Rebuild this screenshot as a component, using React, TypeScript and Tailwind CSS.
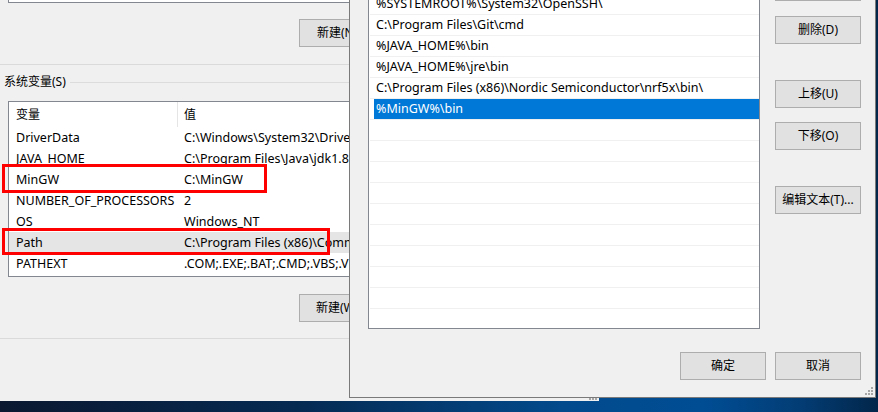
import React from "react";

function Btn({ children, className = "" }: { children?: React.ReactNode; className?: string }) {
  return (
    <div
      className={`flex h-[28px] w-[86px] shrink-0 items-center justify-center border border-[#adadad] bg-[#e1e1e1] text-[12px] leading-[16px] text-black ${className}`}
    >
      {children}
    </div>
  );
}

function Grip() {
  return (
    <svg width="9" height="9" viewBox="0 0 9 9" className="block">
      <rect x="7" y="1" width="2" height="2" fill="#a6a6a6" />
      <rect x="4" y="4" width="2" height="2" fill="#a6a6a6" />
      <rect x="7" y="4" width="2" height="2" fill="#a6a6a6" />
      <rect x="1" y="7" width="2" height="2" fill="#a6a6a6" />
      <rect x="4" y="7" width="2" height="2" fill="#a6a6a6" />
      <rect x="7" y="7" width="2" height="2" fill="#a6a6a6" />
    </svg>
  );
}

const sysVars: [string, string][] = [
  ["DriverData", "C:\\Windows\\System32\\Drivers\\DriverData"],
  ["JAVA_HOME", "C:\\Program Files\\Java\\jdk1.8.0_201"],
  ["MinGW", "C:\\MinGW"],
  ["NUMBER_OF_PROCESSORS", "2"],
  ["OS", "Windows_NT"],
  ["Path", "C:\\Program Files (x86)\\Common Files\\Oracle\\Java\\javapath"],
  ["PATHEXT", ".COM;.EXE;.BAT;.CMD;.VBS;.VBE;.JS;.JSE;.WSF;.WSH;.MSC"],
];

const pathItems = [
  "%SYSTEMROOT%\\System32\\OpenSSH\\",
  "C:\\Program Files\\Git\\cmd",
  "%JAVA_HOME%\\bin",
  "%JAVA_HOME%\\jre\\bin",
  "C:\\Program Files (x86)\\Nordic Semiconductor\\nrf5x\\bin\\",
];

export default function App() {
  return (
    <div className="relative h-[412px] w-[878px] overflow-hidden bg-[linear-gradient(90deg,#0b1830_0%,#052a52_34%,#024a8c_64%,#004d94_80%,#033d75_91%,#02264a_100%)] font-['Noto_Sans','Noto_Sans_CJK_SC',sans-serif] text-[12px] text-black">
      {/* Back window: 环境变量 */}
      <div className="absolute left-0 top-0 flex h-[401px] w-[599px] flex-col bg-[#f0f0f0]">
        <div className="ml-[8px] h-[3px] w-[580px] border-x border-b border-[#828790] bg-white" />
        <Btn className="ml-[299px] mt-[16px]">新建(N)...</Btn>
        <div className="mt-[17px] h-px bg-[#dadada]" />
        <div className="mt-[9px] flex h-[16px] items-center">
          <span className="ml-[4px] leading-[16px]">系统变量(S)</span>
          <div className="ml-[4px] h-px flex-1 bg-[#dcdcdc]" />
        </div>
        <div className="ml-[8px] mt-[11px] h-[176px] w-[580px] overflow-hidden border border-[#828790] bg-white">
          <div className="flex h-[25px] items-center">
            <div className="flex h-full w-[169px] items-center border-r border-[#e5e5e5] pl-[7px]">变量</div>
            <div className="pl-[6px]">值</div>
          </div>
          {sysVars.map(([k, v]) => (
            <div
              key={k}
              className={`flex h-[21px] items-center whitespace-nowrap pt-px text-[12.5px] ${k === "Path" ? "bg-[#e5e5e5]" : ""}`}
            >
              <div className="w-[169px] shrink-0 pl-[7px]">{k}</div>
              <div className="pl-[6px]">{v}</div>
            </div>
          ))}
        </div>
        <Btn className="ml-[299px] mt-[17px]">新建(W)...</Btn>
        <div className="mt-[16px] h-px bg-[#dadada]" />
        <div className="absolute bottom-[1px] right-[2px]">
          <Grip />
        </div>
      </div>

      {/* Red annotation boxes */}
      <div className="absolute left-[2px] top-[164px] h-[29px] w-[265px] border-[3px] border-[#ff0000]" />
      <div className="absolute left-[2px] top-[228px] h-[27px] w-[328px] border-[3px] border-[#ff0000]" />

      {/* Front window: 编辑环境变量 */}
      <div className="absolute left-[349px] top-0 flex h-[398px] w-[527px] flex-col border-x border-b border-[#7a7a7a] bg-[#f0f0f0]">
        <div className="flex">
          <div className="ml-[18px] h-[329px] w-[392px] shrink-0 overflow-hidden border-x border-b border-[#828790] bg-white text-[12.5px]">
            <div className="-mt-[6px]">
              {pathItems.map((p) => (
                <div
                  key={p}
                  className="ml-[1px] flex h-[21px] items-center whitespace-nowrap border-b border-[#f0f0f0] pl-[6px] pt-px"
                >
                  {p}
                </div>
              ))}
              <div className="ml-[1px] h-[21px] border-b border-[#f0f0f0]">
                <div className="ml-[4px] flex h-[20px] items-center bg-[#0078d7] pl-[2px] pt-px text-white">%MinGW%\bin</div>
              </div>
              {Array.from({ length: 10 }).map((_, i) => (
                <div key={i} className="ml-[1px] h-[21px] border-b border-[#f0f0f0]" />
              ))}
            </div>
          </div>
          <div className="ml-[15px] flex flex-col">
            <Btn className="-mt-[27px]">编辑(E)</Btn>
            <Btn className="mt-[15px]">删除(D)</Btn>
            <Btn className="mt-[36px]">上移(U)</Btn>
            <Btn className="mt-[14px]">下移(O)</Btn>
            <Btn className="mt-[36px]">编辑文本(T)...</Btn>
          </div>
        </div>
        <div className="mt-[23px] flex justify-end gap-[9px] pr-[14px]">
          <Btn>确定</Btn>
          <Btn>取消</Btn>
        </div>
        <div className="absolute bottom-[2px] right-[2px]">
          <Grip />
        </div>
      </div>
    </div>
  );
}
